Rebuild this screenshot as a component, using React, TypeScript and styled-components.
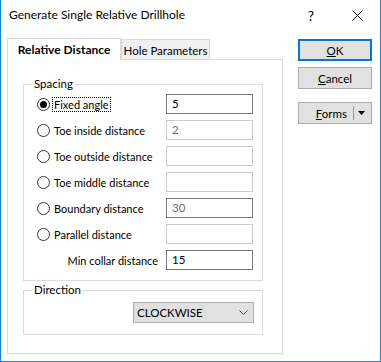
import React from "react";
import styled, { createGlobalStyle } from "styled-components";

const GlobalStyle = createGlobalStyle`
  html, body { margin: 0; padding: 0; background: #ffffff; }
  body {
    font-family: "Segoe UI", Lato, "Noto Sans", sans-serif;
    font-size: 11px;
    color: #000000;
  }
  * { box-sizing: border-box; }
`;

const Window = styled.div`
  width: 381px;
  height: 362px;
  background: #ffffff;
  border: 1px solid #1883d7;
  border-top: none;
  display: flex;
  flex-direction: column;
`;

const TitleBar = styled.div`
  height: 30px;
  display: flex;
  align-items: center;
  padding-left: 8px;
`;

const Title = styled.div`
  flex: 1;
  font-size: 12px;
  line-height: 16px;
  white-space: nowrap;
`;

const CaptionButton = styled.div`
  width: 46px;
  height: 30px;
  display: flex;
  align-items: center;
  justify-content: center;
  font-size: 14px;
  color: #000;
`;

const Body = styled.div`
  display: flex;
  padding: 8px 0 0 6px;
`;

const LeftColumn = styled.div`
  width: 276px;
  display: flex;
  flex-direction: column;
`;

const TabStrip = styled.div`
  height: 21px;
  display: flex;
  align-items: flex-end;
`;

const Tab = styled.div<{ $active?: boolean }>`
  position: relative;
  z-index: ${(p) => (p.$active ? 1 : 0)};
  width: ${(p) => (p.$active ? 114 : 89)}px;
  height: ${(p) => (p.$active ? 22 : 20)}px;
  margin-bottom: ${(p) => (p.$active ? -1 : 0)}px;
  background: ${(p) => (p.$active ? "#ffffff" : "#f0f0f0")};
  border: 1px solid #d9d9d9;
  border-bottom: none;
  font-size: ${(p) => (p.$active ? 12 : 11.5)}px;
  font-weight: ${(p) => (p.$active ? 700 : 400)};
  display: flex;
  align-items: center;
  justify-content: center;
  white-space: nowrap;
  padding-top: ${(p) => (p.$active ? 0 : 1)}px;
`;

const Panel = styled.div`
  width: 276px;
  height: 295px;
  border: 1px solid #d9d9d9;
  padding: 16px 0 0 15px;
  display: flex;
  flex-direction: column;
`;

const Group = styled.fieldset<{ $gapTop?: number }>`
  width: 240px;
  margin: ${(p) => p.$gapTop ?? 0}px 0 0 0;
  padding: 0;
  border: 1px solid #dcdcdc;
  min-width: 0;
`;

const Legend = styled.legend`
  margin-left: 8px;
  padding: 0 2px;
  line-height: 16px;
  font-size: 11.5px;
`;

const GroupBody = styled.div<{ $pad: string }>`
  padding: ${(p) => p.$pad};
  display: flex;
  flex-direction: column;
  gap: 6px;
`;

const Row = styled.div`
  height: 20px;
  display: flex;
  align-items: center;
`;

const Radio = styled.span<{ $checked?: boolean }>`
  width: 13px;
  height: 13px;
  border-radius: 50%;
  border: 1px solid #333333;
  background: #ffffff;
  display: flex;
  align-items: center;
  justify-content: center;
  flex: none;
  margin-right: 3px;
  &::after {
    content: "";
    width: 7px;
    height: 7px;
    border-radius: 50%;
    background: ${(p) => (p.$checked ? "#000000" : "transparent")};
  }
`;

const Label = styled.span<{ $focus?: boolean; $right?: boolean }>`
  flex: 1;
  min-width: 0;
  display: flex;
  justify-content: ${(p) => (p.$right ? "flex-end" : "flex-start")};
  padding-right: ${(p) => (p.$right ? 7 : 0)}px;
  white-space: nowrap;
  font-size: 11px;
  & > span {
    line-height: 13px;
    padding: 0 1px;
    outline: ${(p) => (p.$focus ? "1px dotted #000" : "none")};
    outline-offset: 0;
  }
`;

const Field = styled.div<{ $enabled?: boolean; $dim?: boolean }>`
  width: 87px;
  height: 20px;
  flex: none;
  border: 1px solid ${(p) => (p.$enabled ? "#7a7a7a" : "#cccccc")};
  background: #ffffff;
  color: ${(p) => (p.$dim ? "#6d6d6d" : "#000000")};
  padding-left: 5px;
  line-height: 18px;
  font-size: 11.5px;
`;

const ComboRow = styled.div`
  display: flex;
  justify-content: flex-end;
`;

const Combo = styled.div`
  width: 121px;
  height: 21px;
  border: 1px solid #adadad;
  background: #e1e1e1;
  display: flex;
  align-items: center;
  justify-content: space-between;
  padding: 0 5px 0 3px;
  font-size: 11.5px;
`;

const ButtonColumn = styled.div`
  margin-left: 15px;
  padding-top: 1px;
  display: flex;
  flex-direction: column;
`;

const Button = styled.div<{ $default?: boolean; $gap?: number }>`
  width: 74px;
  height: 22px;
  margin-top: ${(p) => p.$gap ?? 0}px;
  background: #e1e1e1;
  border: ${(p) => (p.$default ? "2px solid #0078d7" : "1px solid #adadad")};
  display: flex;
  align-items: center;
  justify-content: center;
  white-space: nowrap;
  font-size: 11.5px;
`;

const SplitButton = styled(Button)`
  justify-content: flex-end;
`;

const SplitDivider = styled.span`
  width: 1px;
  height: 14px;
  background: #9a9a9a;
  margin: 0 4px 0 6px;
`;

const ArrowBox = styled.span`
  width: 13px;
  display: flex;
  justify-content: flex-start;
  align-items: center;
`;

const U = styled.span`
  text-decoration: underline;
`;

type Opt = { label: string; value?: string; enabled?: boolean; dim?: boolean; checked?: boolean };

const options: Opt[] = [
  { label: "Fixed angle", value: "5", enabled: true, checked: true },
  { label: "Toe inside distance", value: "2", dim: true },
  { label: "Toe outside distance" },
  { label: "Toe middle distance" },
  { label: "Boundary distance", value: "30", enabled: true, dim: true },
  { label: "Parallel distance" },
];

export default function App() {
  return (
    <>
      <GlobalStyle />
      <Window>
        <TitleBar>
          <Title>Generate Single Relative Drillhole</Title>
          <CaptionButton>?</CaptionButton>
          <CaptionButton>
            <svg width="11" height="11" viewBox="0 0 11 11">
              <path d="M0.5 0.5 L10.5 10.5 M10.5 0.5 L0.5 10.5" stroke="#000" strokeWidth="1" />
            </svg>
          </CaptionButton>
        </TitleBar>
        <Body>
          <LeftColumn>
            <TabStrip>
              <Tab $active>Relative Distance</Tab>
              <Tab>Hole Parameters</Tab>
            </TabStrip>
            <Panel>
              <Group>
                <Legend>Spacing</Legend>
                <GroupBody $pad="2px 9px 10px 13px">
                  {options.map((o) => (
                    <Row key={o.label}>
                      <Radio $checked={o.checked} />
                      <Label $focus={o.checked}>
                        <span>{o.label}</span>
                      </Label>
                      <Field $enabled={o.enabled} $dim={o.dim}>
                        {o.value ?? ""}
                      </Field>
                    </Row>
                  ))}
                  <Row>
                    <Label $right>
                      <span>Min collar distance</span>
                    </Label>
                    <Field $enabled>15</Field>
                  </Row>
                </GroupBody>
              </Group>
              <Group $gapTop={1}>
                <Legend>Direction</Legend>
                <GroupBody $pad="4px 8px 11px 13px">
                  <ComboRow>
                    <Combo>
                      <span>CLOCKWISE</span>
                      <svg width="9" height="5" viewBox="0 0 9 5">
                        <path d="M0.5 0.5 L4.5 4.5 L8.5 0.5" stroke="#444" strokeWidth="1" fill="none" />
                      </svg>
                    </Combo>
                  </ComboRow>
                </GroupBody>
              </Group>
            </Panel>
          </LeftColumn>
          <ButtonColumn>
            <Button $default>
              <span>
                <U>O</U>K
              </span>
            </Button>
            <Button $gap={6}>
              <span>
                <U>C</U>ancel
              </span>
            </Button>
            <SplitButton $gap={13}>
              <span>
                <U>F</U>orms
              </span>
              <SplitDivider />
              <ArrowBox>
                <svg width="7" height="4" viewBox="0 0 7 4">
                  <path d="M0 0 H7 L3.5 4 Z" fill="#000" />
                </svg>
              </ArrowBox>
            </SplitButton>
          </ButtonColumn>
        </Body>
      </Window>
    </>
  );
}
